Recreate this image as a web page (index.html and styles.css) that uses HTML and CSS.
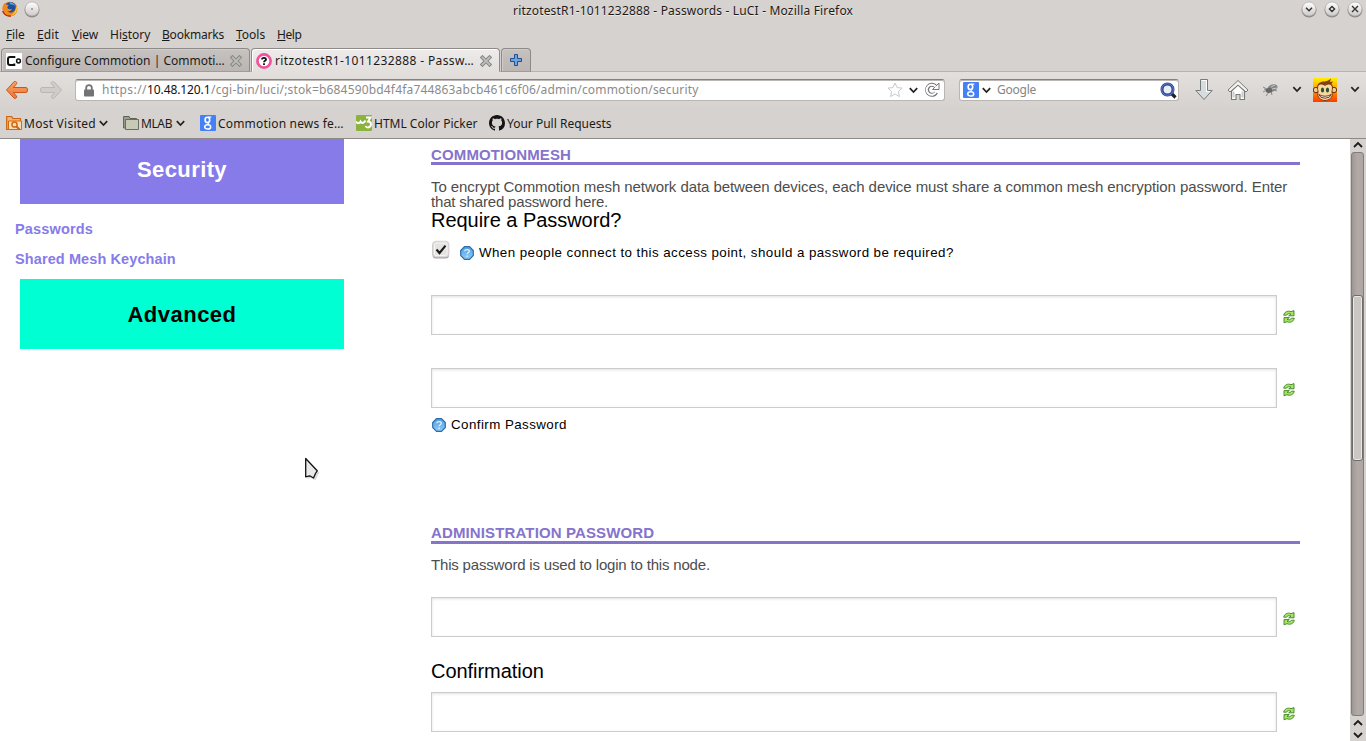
FILE: index.html
```html
<!DOCTYPE html>
<html lang="en">
<head>
<meta charset="utf-8">
<title>ritzotestR1-1011232888 - Passwords - LuCI</title>
<link rel="stylesheet" href="styles.css">
</head>
<body>
<svg class="defs" width="0" height="0">
  <defs>
    <linearGradient id="orange" x1="0" y1="0" x2="0" y2="1"><stop offset="0" stop-color="#f9a35f"/><stop offset="1" stop-color="#ee7440"/></linearGradient>
    <linearGradient id="knob" x1="0" y1="0" x2="0" y2="1"><stop offset="0" stop-color="#fff"/><stop offset="1" stop-color="#cdc9c7"/></linearGradient>
    <linearGradient id="blue" x1="0" y1="0" x2="0" y2="1"><stop offset="0" stop-color="#4f9fe0"/><stop offset="1" stop-color="#8ecbfa"/></linearGradient>
    <linearGradient id="banana" x1="0" y1="0" x2="0" y2="1"><stop offset="0" stop-color="#ffee00"/><stop offset=".5" stop-color="#ff9a00"/><stop offset="1" stop-color="#ff3a00"/></linearGradient>
  </defs>
  <symbol id="chev" viewBox="0 0 9 7"><path d="M.8 1.200 4.500 5.100 8.200 1.200" fill="none" stroke="#222" stroke-width="1.700"/></symbol>
  <symbol id="close" viewBox="0 0 12 12"><path d="M2.500 2.500 9.500 9.500M9.500 2.500 2.500 9.500" stroke="#858783" stroke-width="3.800" stroke-linecap="square"/><path d="M2.600 2.600 9.400 9.400M9.400 2.600 2.600 9.400" stroke="#bdbdb8" stroke-width="2" stroke-linecap="square"/></symbol>
  <symbol id="google" viewBox="0 0 16 16"><rect width="16" height="16" rx="1" fill="#4580f4"/><g fill="none" stroke="#fff"><ellipse cx="7.400" cy="4.900" rx="2.300" ry="2.600" stroke-width="1.600"/><path d="M8 2.200h3.300M9 7.300c-1.600 1-1.200 1.500.1 2.200" stroke-width="1.200"/><ellipse cx="7.700" cy="11.900" rx="3" ry="2.200" stroke-width="1.500"/></g></symbol>
  <symbol id="help" viewBox="0 0 14 14"><path d="M4.500.7h5l3.800 3.800v5l-3.800 3.800h-5L.7 9.500v-5z" fill="url(#blue)" stroke="#2e6da8" stroke-width="1.200"/><path d="M4.800 5.300c0-2.400 4.500-2.300 4.500 0 0 1.500-2.200 1.400-2.200 3M7.100 9.500v1.500" fill="none" stroke="#e4f2ff" stroke-width="1.300"/></symbol>
  <symbol id="refresh" viewBox="0 0 12 14"><g fill="#a4e564" stroke="#3c8220" stroke-width=".9" stroke-linejoin="round"><path d="M.7 5.200C1.300 2 4.500.2 8 1.700L11 .6v5.200H5.700L8 4.100C6 3.300 4.300 3.700 3.500 5.200z"/><path d="M11.300 8.200C10.700 11.400 7.500 13.200 4 11.700L1 12.800V7.600h5.300L4 9.300c2 .8 3.700.4 4.500-1.100z"/></g></symbol>
</svg>

<header class="chrome">
  <div class="titlebar">
    <svg class="fx" width="16" height="16" viewBox="0 0 16 16"><circle cx="8" cy="8" r="7.300" fill="#e8661a"/><circle cx="8.500" cy="6.500" r="5.400" fill="#1f4f9c"/><path d="M7 1.300c3-.6 6 1.500 6 4.200-1-1.500-3-2.300-4.500-1.700z" fill="#4ba3df"/><path d="M.8 5c.6-1.600 1.500-2.700 2.200-3l.8 1.600L6.800 4 5.500 6c-.5 1 .5 2 2 2.200 1 .5 2-.4 2.500-.2-.7 1.800-2.500 2.800-4.500 2.200 2 2.500 7 1.800 8-2.700L14 4.200c1.500 2 1.700 5 .2 7.600-3 5-10.700 4.600-13-.8C.3 9 .3 6.700.8 5z" fill="#f08a1d"/><path d="M14.300 5c1 2 .8 5-.8 7-1.500 2-4 3-6 2.800 4-1 6.500-4 6.800-9.800z" fill="#fbd437"/><path d="M1 10c1.500 4 5 5.500 8 5-5 .8-8.800-3-8-5z" fill="#b92d12" stroke="#b92d12"/></svg>
    <svg class="pin" width="16" height="17" viewBox="0 0 16 17"><circle cx="8" cy="9" r="7.500" fill="#8d8987"/><circle cx="8" cy="8" r="7" fill="url(#knob)" stroke="#aaa6a4" stroke-width=".6"/><circle cx="8" cy="8" r=".8" fill="#555"/></svg>
    <div class="window-title">ritzotestR1-1011232888 - Passwords - LuCI - Mozilla Firefox</div>
    <div class="window-buttons">
      <svg width="16" height="17" viewBox="0 0 16 17"><circle cx="8" cy="9" r="7.500" fill="#8d8987"/><circle cx="8" cy="8" r="7" fill="url(#knob)" stroke="#aaa6a4" stroke-width=".6"/><path d="M5 6.800 8 9.800l3-3" fill="none" stroke="#333" stroke-width="1.400"/></svg>
      <svg width="16" height="17" viewBox="0 0 16 17"><circle cx="8" cy="9" r="7.500" fill="#8d8987"/><circle cx="8" cy="8" r="7" fill="url(#knob)" stroke="#aaa6a4" stroke-width=".6"/><path d="M8 5.400 10.600 8 8 10.600 5.400 8z" fill="none" stroke="#333" stroke-width="1.400"/></svg>
      <svg width="16" height="17" viewBox="0 0 16 17"><circle cx="8" cy="9" r="7.500" fill="#8d8987"/><circle cx="8" cy="8" r="7" fill="url(#knob)" stroke="#aaa6a4" stroke-width=".6"/><path d="M5 5l6 6M11 5l-6 6" stroke="#333" stroke-width="1.400"/></svg>
    </div>
  </div>

  <nav class="menubar">
    <span class="m-file"><u>F</u>ile</span><span class="m-edit"><u>E</u>dit</span><span class="m-view"><u>V</u>iew</span><span class="m-history">Hi<u>s</u>tory</span><span class="m-bookmarks"><u>B</u>ookmarks</span><span class="m-tools"><u>T</u>ools</span><span class="m-help"><u>H</u>elp</span>
  </nav>

  <div class="tabs">
    <div class="tab">
      <svg width="16" height="16" viewBox="0 0 16 16"><rect width="16" height="16" fill="#fff"/><path d="M8.300 5V4H4Q2 4 2 6v4q0 2 2 2h4.300v-1.500" fill="none" stroke="#111" stroke-width="2"/><circle cx="12.500" cy="8" r="1.900" fill="none" stroke="#111" stroke-width="1.500"/></svg>
      <span class="tab-title">Configure Commotion | Commoti…</span>
      <svg class="x" width="12" height="12"><use href="#close"/></svg>
    </div>
    <div class="tab active">
      <svg width="16" height="16" viewBox="0 0 16 16"><circle cx="8" cy="8" r="6.600" fill="#fff" stroke="#f4509c" stroke-width="2.700"/><path d="M6 6.500c0-2.300 4-2.200 4 0C10 8 8 7.700 8 9.300M8 10.300v1.600" fill="none" stroke="#111" stroke-width="1.800"/></svg>
      <span class="tab-title second">ritzotestR1-1011232888 - Passw…</span>
      <svg class="x" width="12" height="12"><use href="#close"/></svg>
    </div>
    <div class="tab new"><svg width="12" height="12" viewBox="0 0 12 12"><path d="M4.500.5h3v4h4v3h-4v4h-3v-4h-4v-3h4z" fill="#6ea3dc" stroke="#1d4f93"/></svg></div>
  </div>

  <div class="toolbar">
    <svg class="back" width="24" height="20" viewBox="0 0 24 20"><path d="M10.500 1.500c1.300.3 1.600 1.600 1 2.400L8.300 7.500H21q1.500 0 1.500 2.500T21 12.500H8.300l3.200 3.600c.7 1.300-.8 3-2.300 2.200L1.500 10 9 1.800q.6-.5 1.500-.3z" fill="url(#orange)" stroke="#c9561a"/></svg>
    <svg class="forward" width="24" height="20" viewBox="0 0 24 20"><path d="M13.500 1.500c-1.300.3-1.600 1.600-1 2.400l3.200 3.600H3Q1.500 7.500 1.500 10T3 12.500h12.700l-3.200 3.600c-.7 1.300.8 3 2.300 2.200L22.500 10 15 1.800q-.6-.5-1.500-.3z" fill="#d0ccca" stroke="#bab6b3"/></svg>
    <div class="field url">
      <svg class="lock" width="10" height="13" viewBox="0 0 10 13"><path d="M2.200 6V3.800c0-3.600 5.600-3.600 5.600 0V6" fill="none" stroke="#737373" stroke-width="1.800"/><rect y="5.500" width="10" height="7" rx=".8" fill="#737373"/></svg>
      <div class="address"><span class="scheme">https://</span><span class="host">10.48.120.1</span><span class="path">/cgi-bin/luci/;stok=b684590bd4f4fa744863abcb461c6f06/admin/commotion/security</span></div>
      <svg class="star" width="16" height="16" viewBox="0 0 16 16"><path d="M8 1l2.100 4.600 5 .5-3.700 3.400 1 5L8 12l-4.400 2.500 1-5L.9 6.100l5-.5z" fill="#fff" stroke="#c9c9c9" stroke-linejoin="round"/></svg>
      <svg class="drop" width="9" height="7"><use href="#chev"/></svg>
      <svg class="reload" width="16" height="16" viewBox="0 0 16 16"><path d="M12.300 10.500A5 5 0 1 1 11.300 4" fill="none" stroke="#777" stroke-width="4"/><path d="M15 1v6.500H8.500l3-3z" fill="#fff" stroke="#777"/><path d="M12 10.300A5 5 0 1 1 11.500 4.500" fill="none" stroke="#fff" stroke-width="2"/></svg>
    </div>
    <div class="field search">
      <svg width="16" height="16"><use href="#google"/></svg>
      <svg class="sdrop" width="9" height="7"><use href="#chev"/></svg>
      <span class="engine">Google</span>
      <svg class="lens" width="17" height="17" viewBox="0 0 17 17"><path d="M11.500 11.500l4 4" stroke="#222" stroke-width="3.200"/><circle cx="7.500" cy="7.500" r="5.500" fill="#e8edf8" stroke="#27408f" stroke-width="3"/><circle cx="7.500" cy="7.500" r="5.800" fill="none" stroke="#6f8ad2" stroke-width=".9"/></svg>
    </div>
    <svg class="download" width="18" height="22" viewBox="0 0 18 22"><path d="M5.500.5h7v11h4.700L9 20.500.8 11.500h4.700z" fill="#d7dcde" stroke="#757b7b"/><path d="M6.500 1.500h5v11h3.400" fill="none" stroke="#fff"/></svg>
    <svg class="home" width="22" height="22" viewBox="0 0 22 22"><path d="M4.500 12v8.500H9v-5h4v5h4.500V12L11 6z" fill="#fff" stroke="#777a76" stroke-width="1.100"/><path d="M6.500 18.500v-6M15.500 18.500v-6" stroke="#c9cbc8" stroke-width="2"/><path d="M11 1.500 1 11l2 2 8-7 8 7 2-2z" fill="#f1f1ef" stroke="#777a76" stroke-linejoin="round"/></svg>
    <svg class="fly" width="17" height="14" viewBox="0 0 17 14"><path d="M1 4l4 2M1 9l4-2M4 13l3-4M10 12l-1-4M15 8l-4-2M2 6l4 1" stroke="#8a8a8a" fill="none"/><ellipse cx="10.500" cy="5" rx="5.200" ry="3.600" transform="rotate(-22 10.500 5)" fill="#858585"/><ellipse cx="7" cy="7.500" rx="3.200" ry="2.500" fill="#666"/><path d="M9 4l4-2M10 6l5-1" stroke="#c8c8c8"/></svg>
    <svg class="d1" width="10" height="7"><use href="#chev"/></svg>
    <svg class="monkey" width="24" height="24" viewBox="0 0 24 24"><rect width="24" height="24" fill="url(#banana)"/><path d="M4 10c0-5 4-7 8-6.500 2-.5 4.500-1.500 6-3L17 4l3-.5-1.500 2.500q2 2 1.500 5z" fill="#88410e"/><circle cx="3" cy="12" r="2.700" fill="#f5c98d" stroke="#6e320c"/><circle cx="21" cy="12" r="2.700" fill="#f5c98d" stroke="#6e320c"/><path d="M4.500 10c0-5 5.500-4.500 7.500-2.500 2-2 7.500-2.500 7.500 2.500 0 2-1 3-.3 5 1 4-3 7.500-7.200 7.500S3.800 19 4.800 15c.7-2-.3-3-.3-5z" fill="#fbd69f" stroke="#6e320c" stroke-width=".9"/><ellipse cx="9.500" cy="12" rx="1.600" ry="2.600" fill="#22532e"/><ellipse cx="14.500" cy="12" rx="1.600" ry="2.600" fill="#22532e"/><path d="M5.800 16.500q6.200 3.500 12.400 0-1.200 3.700-6.200 3.700t-6.200-3.700z" fill="#fff" stroke="#5d250b" stroke-width=".9"/></svg>
    <svg class="d2" width="10" height="7"><use href="#chev"/></svg>
  </div>

  <div class="bookmarks">
    <svg width="16" height="16" viewBox="0 0 16 16"><path d="M.7 14.500V1.500h5l1 2h7.800v11z" fill="#f5b36d" stroke="#ca6410" stroke-width="1.200"/><path d="M2.500 14V6h13v8.500h-13z" fill="#fbdcb5" stroke="#d06a14"/><circle cx="8.500" cy="9.500" r="2.600" fill="none" stroke="#d06a14" stroke-width="1.500"/><path d="M10.500 11.500l3 3" stroke="#ca6410" stroke-width="2"/></svg>
    <span class="b-most">Most Visited</span><svg class="bdrop" width="9" height="7"><use href="#chev"/></svg>
    <svg class="b-folder" width="16" height="16" viewBox="0 0 16 16"><path d="M.6 13V1.500h5.500l1 2h6.400V13z" fill="#9d9f8f" stroke="#5e6054"/><path d="M2.500 14.500v-10h13v10z" fill="#c6c9b5" stroke="#6a6c5f"/></svg>
    <span class="b-mlab">MLAB</span><svg class="bdrop" width="9" height="7"><use href="#chev"/></svg>
    <svg class="b-g" width="16" height="16"><use href="#google"/></svg>
    <span class="b-news">Commotion news fe…</span>
    <svg width="16" height="16" viewBox="0 0 16 16"><rect width="16" height="16" rx="1" fill="#8bb33d"/><path d="M0 6.500Q2.500 10 4.500 6.500 6.500 10 9.500 5.500M10 2.500h4.500L12 6.500q3 0 3 2.800T12 12.500q-2 0-2.500-1.500" fill="none" stroke="#fff" stroke-width="1.900"/></svg>
    <span class="b-html">HTML Color Picker</span>
    <svg width="16" height="16" viewBox="0 0 16 16"><path fill="#151313" d="M8 0C3.580 0 0 3.580 0 8c0 3.540 2.290 6.530 5.470 7.590.4.070.55-.17.55-.38 0-.19-.010-.82-.010-1.490-2.010.37-2.530-.49-2.690-.94-.09-.23-.48-.94-.82-1.130-.28-.15-.68-.52-.010-.53.63-.010 1.080.58 1.230.82.72 1.210 1.870.87 2.330.66.070-.52.28-.87.51-1.070-1.780-.2-3.640-.89-3.640-3.950 0-.87.31-1.590.82-2.150-.080-.2-.36-1.020.080-2.120 0 0 .67-.21 2.200.82.64-.18 1.320-.27 2-.27s1.360.09 2 .27c1.530-1.040 2.200-.82 2.200-.82.44 1.100.16 1.920.080 2.120.51.56.82 1.270.82 2.150 0 3.070-1.870 3.750-3.650 3.950.29.25.54.73.54 1.480 0 1.070-.010 1.930-.010 2.200 0 .21.15.46.55.38A8.010 8.010 0 0 0 16 8c0-4.420-3.580-8-8-8z"/></svg>
    <span class="b-pull">Your Pull Requests</span>
  </div>
</header>

<div class="viewport">
  <aside class="sidebar">
    <div class="side-button security">Security</div>
    <div class="links"><a class="l-pass">Passwords</a><a class="l-mesh">Shared Mesh Keychain</a></div>
    <div class="side-button advanced">Advanced</div>
  </aside>
  <main class="content">
    <section>
      <h3>COMMOTIONMESH</h3>
      <p class="intro"><span class="ln1">To encrypt Commotion mesh network data between devices, each device must share a common mesh encryption password. Enter</span><br>that shared password here.</p>
      <h2>Require a Password?</h2>
      <div class="check-row">
        <svg class="checkbox" width="20" height="20" viewBox="0 0 20 20"><rect x="1.500" y="2" width="16.500" height="16.500" rx="3.500" fill="#a5a2a0"/><rect x="1.500" y="1.200" width="16.500" height="16" rx="3.500" fill="#dedcdb" stroke="#c8c5c3" stroke-width=".6"/><rect x="3.500" y="3" width="12.500" height="12.500" rx="1.500" fill="#e5e3e2" stroke="#f5f4f4"/><path d="M5.500 9.500l3 3.500 6-7.300" fill="none" stroke="#1a1a1a" stroke-width="2.100"/></svg>
        <svg class="help" width="14" height="14"><use href="#help"/></svg>
        <span class="hint">When people connect to this access point, should a password be required?</span>
      </div>
      <div class="input-row"><div class="input"></div><svg width="12" height="14"><use href="#refresh"/></svg></div>
      <div class="input-row r2"><div class="input"></div><svg width="12" height="14"><use href="#refresh"/></svg></div>
      <div class="confirm-row"><svg class="help" width="14" height="14"><use href="#help"/></svg><span class="hint2">Confirm Password</span></div>
    </section>
    <section>
      <h3 class="h-admin">ADMINISTRATION PASSWORD</h3>
      <p class="login">This password is used to login to this node.</p>
      <div class="input-row r3"><div class="input"></div><svg width="12" height="14"><use href="#refresh"/></svg></div>
      <h2 class="confirmation">Confirmation</h2>
      <div class="input-row r4"><div class="input"></div><svg width="12" height="14"><use href="#refresh"/></svg></div>
    </section>
  </main>
  <div class="scrollbar">
    <svg class="up" width="10" height="7" viewBox="0 0 10 7"><path d="M1 6 5 2l4 4" fill="none" stroke="#1c1c1c" stroke-width="1.800"/></svg>
    <div class="trough"><div class="thumb"></div></div>
    <svg class="up2" width="10" height="7" viewBox="0 0 10 7"><path d="M1 6 5 2l4 4" fill="none" stroke="#1c1c1c" stroke-width="1.800"/></svg>
    <svg class="down" width="10" height="7" viewBox="0 0 10 7"><path d="M1 1l4 4 4-4" fill="none" stroke="#1c1c1c" stroke-width="1.800"/></svg>
  </div>
</div>
<svg class="cursor" width="18" height="25" viewBox="0 0 18 25"><path d="M2 2v18.500l3.500-1L10 22l2-4.500 2-3.500z" fill="#777" opacity=".25" transform="translate(1.500 1.500)"/><path d="M1.700 1.500v18.300l4-1L9.500 21l2-4.500 1.700-2.700z" fill="#e9e9e9" stroke="#111" stroke-width="1.300" stroke-linejoin="round"/></svg>
</body>
</html>
```
FILE: styles.css
```css
* { box-sizing: border-box; }
body { margin: 0; width: 1366px; height: 741px; overflow: hidden; background: #fff; font-family: "Liberation Sans", Arial, sans-serif; }
svg { display: block; flex: none; }
.defs { position: absolute; }
h2, h3, p { margin: 0; }

/* Browser chrome */
.chrome { height: 139px; background: #d6d2cf; border-bottom: 1px solid #8d8a88; font: 12px/16px "Noto Sans", sans-serif; color: #1c1a19; white-space: nowrap; }
.titlebar { height: 22px; display: flex; align-items: flex-start; }
.fx { margin: 1px 0 0 2px; }
.pin { margin: 1px 0 0 6px; }
.window-title { margin: 3px 0 0 473px; width: 340px; letter-spacing: .17px; text-shadow: 0 1px #eceae9; }
.window-buttons { display: flex; gap: 7px; margin: 1px 0 0 448px; }
.menubar { height: 25px; padding: 5px 0 0 6px; display: flex; }
.menubar u { text-underline-offset: 1px; }
.m-file { width: 31px; letter-spacing: -.15px; }
.m-edit { width: 35px; letter-spacing: .13px; }
.m-view { width: 38px; }
.m-history { width: 52px; }
.m-bookmarks { width: 74px; letter-spacing: -.2px; }
.m-tools { width: 41px; }
.m-help { letter-spacing: -.4px; }

.tabs { height: 25px; padding: 1px 0 0 1px; display: flex; border-bottom: 1px solid #b6b2b0; }
.tab { width: 249px; height: 24px; margin-right: 1px; padding: 4px 0 0 4px; display: flex; border: 1px solid #8e8a88; border-bottom-color: #a09c9a; border-radius: 4px 4px 0 0; background: linear-gradient(#c6c2c0, #bbb6b4); box-shadow: inset 1px 1px #cfccca; }
.tab.active { border-bottom-color: #e2dfdd; background: linear-gradient(#eeeceb, #e2dfdd); box-shadow: inset 1px 1px #fff; }
.tab-title { margin-left: 3px; width: 205px; }
.tab-title.second { letter-spacing: .38px; }
.tab .x { margin-top: 2px; }
.tab.new { width: 30px; padding: 5px 0 0 8px; }

.toolbar { height: 36px; display: flex; align-items: flex-start; background: linear-gradient(#e2dfdd, #d6d2cf); }
.back { margin: 8px 0 0 5px; }
.forward { margin: 8px 0 0 10px; }
.field { height: 22px; margin-top: 7px; display: flex; background: #fff; border: 1px solid #b9b5b3; border-top-color: #83807e; border-radius: 3px; box-shadow: inset 0 1px #bab7b5; }
.url { width: 870px; margin-left: 12px; }
.lock { margin: 4px 0 0 8px; }
.address { margin: 2px 0 0 8px; width: 785px; color: #8b8b8b; display: flex; }
.scheme { width: 45px; letter-spacing: .46px; }
.host { width: 64px; letter-spacing: -.1px; color: #111; }
.path { letter-spacing: .17px; }
.star { margin-top: 2px; }
.drop { margin: 7px 0 0 6px; }
.reload { margin: 2px 0 0 6px; }
.search { width: 220px; margin-left: 14px; padding: 2px 0 0 3px; }
.sdrop { margin: 5px 0 0 3px; }
.engine { margin-left: 6px; width: 163px; color: #858585; letter-spacing: -.25px; }
.download { margin: 7px 0 0 16px; }
.home { margin: 7px 0 0 14px; }
.fly { margin: 11px 0 0 13px; }
.d1 { margin: 14px 0 0 13px; }
.monkey { margin: 6px 0 0 11px; }
.d2 { margin: 14px 0 0 13px; }

.bookmarks { height: 30px; padding: 7px 0 0 6px; display: flex; }
.bookmarks span { margin: 1px 0 0 2px; }
.b-most { width: 75px; letter-spacing: .25px; }
.bdrop { margin-top: 5px; }
.b-folder { margin-left: 15px; }
.b-mlab { width: 35px; letter-spacing: -.4px; }
.b-g { margin-left: 15px; }
.b-news { width: 138px; letter-spacing: .18px; }
.b-html { width: 115px; }

/* Page */
.viewport { height: 602px; display: flex; overflow: hidden; }
.sidebar { width: 431px; }
.side-button { width: 324px; height: 70px; margin-left: 20px; padding-top: 1px; font-weight: bold; font-size: 22px; line-height: 70px; text-align: center; letter-spacing: .4px; }
.security { margin-top: -5px; background: #877bea; color: #fff; }
.advanced { background: #00ffd3; color: #000; letter-spacing: .48px; }
.links { padding: 10px 0 5px 15px; font: bold 14.5px/30px "Liberation Sans", Arial, sans-serif; color: #877bea; }
.links a { display: block; }
.l-pass { letter-spacing: .16px; }
.l-mesh { letter-spacing: .1px; }
.content { width: 919px; padding-top: 8px; }
h3 { width: 869px; height: 18px; font-size: 15px; line-height: 15px; border-bottom: 3px solid #8573cc; color: #8573cc; letter-spacing: .13px; }
.h-admin { line-height: 13px; }
p { margin-top: 14px; font-size: 15px; line-height: 15px; color: #4d4d4d; letter-spacing: -.18px; white-space: nowrap; }
.ln1 { letter-spacing: -.07px; }
h2 { margin-top: 1px; font-size: 20px; line-height: 20px; font-weight: normal; color: #000; letter-spacing: -.04px; }
.check-row { height: 65px; padding-top: 9px; display: flex; align-items: flex-start; }
.checkbox { margin-top: 1px; }
.help { margin: 7px 0 0 9px; }
.hint, .hint2 { font-size: 13.33px; line-height: 16px; color: #000; letter-spacing: .44px; white-space: nowrap; }
.hint { margin: 6px 0 0 5px; }
.input-row { display: flex; }
.input { width: 846px; height: 40px; border: 1px solid #ccc; background: #fff; box-shadow: inset 0 1px 3px rgba(0, 0, 0, .12); }
.input-row svg { margin: 15px 0 0 6px; }
.r2 { margin-top: 33px; }
.confirm-row { height: 118px; padding-top: 9px; display: flex; align-items: flex-start; }
.confirm-row .help { margin: 1px 0 0 1px; }
.hint2 { margin-left: 5px; }
.login { margin-top: 13px; }
.r3 { margin-top: 25px; }
.confirmation { margin-top: 24px; }
.r4 { margin-top: 11px; }

.scrollbar { width: 16px; height: 602px; background: #d6d2cf; display: flex; flex-direction: column; padding-left: 1px; }
.up { margin: 2px 0 4px 2px; }
.trough { width: 13px; height: 564px; padding-top: 142px; border: 1px solid #827d7a; border-radius: 3px; background: linear-gradient(90deg, #9d9692, #b1aaa6 50%, #aea6a3); }
.thumb { width: 11px; height: 166px; border: 1px solid #6f6b69; border-radius: 3px; background: #cac6c3; box-shadow: inset 0 0 0 1px #e9e7e6; }
.up2 { margin: 3px 0 0 2px; }
.down { margin: 6px 0 0 2px; }
.cursor { position: absolute; left: 304px; top: 457px; }
```
